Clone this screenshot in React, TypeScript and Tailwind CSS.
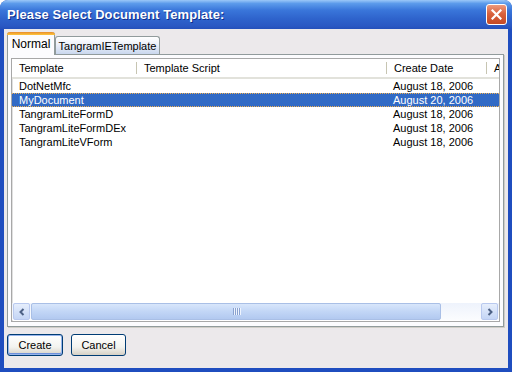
import React from "react";

const rows = [
  { name: "DotNetMfc", date: "August 18, 2006" },
  { name: "MyDocument", date: "August 20, 2006", sel: true },
  { name: "TangramLiteFormD", date: "August 18, 2006" },
  { name: "TangramLiteFormDEx", date: "August 18, 2006" },
  { name: "TangramLiteVForm", date: "August 18, 2006" },
];

function HeaderCell({ label, w }: { label: string; w?: string }) {
  return (
    <div className={`relative flex h-full shrink-0 items-center pl-[6px] ${w ?? "flex-1"}`}>
      <span className="whitespace-nowrap">{label}</span>
      <div className="absolute right-0 top-[3px] bottom-[3px] flex">
        <div className="w-px bg-[#C7C5B2]" />
        <div className="w-px bg-white" />
      </div>
    </div>
  );
}

function ArrowBtn({ dir }: { dir: "l" | "r" }) {
  return (
    <div className="flex h-[17px] w-[17px] shrink-0 items-center justify-center rounded-[2px] border border-[#B9C9EF] bg-gradient-to-b from-[#E6EEFC] to-[#C4D5F5]">
      <svg width="8" height="8" viewBox="0 0 8 8">
        <path
          d={dir === "l" ? "M5.5 1 L2.5 4 L5.5 7" : "M2.5 1 L5.5 4 L2.5 7"}
          fill="none"
          stroke="#4D6185"
          strokeWidth="2"
        />
      </svg>
    </div>
  );
}

export default function App() {
  return (
    <div className="flex h-[372px] w-[512px] flex-col overflow-hidden rounded-t-[8px] bg-[#1F4DBF] font-['Liberation_Sans',Arial,sans-serif] text-[11px] text-black">
      {/* title bar */}
      <div className="flex h-[29px] shrink-0 items-center justify-between bg-[linear-gradient(to_bottom,#9CC8F8_0%,#5C9BEB_12%,#3A76DA_35%,#2E63CC_65%,#2A58C3_90%,#2450BA_100%)] pl-[7px] pr-[5px]">
        <span className="text-[13px] font-bold tracking-[0.1px] text-white [text-shadow:1px_1px_0_#0F2E8A]">
          Please Select Document Template:
        </span>
        <div className="flex h-[21px] w-[21px] items-center justify-center rounded-[3px] border border-white bg-[linear-gradient(to_bottom,#EE9A7E,#D9623E_45%,#C54A25)]">
          <svg width="11" height="11" viewBox="0 0 11 11">
            <path d="M1.5 1.5 L9.5 9.5 M9.5 1.5 L1.5 9.5" stroke="white" strokeWidth="2.2" strokeLinecap="square" />
          </svg>
        </div>
      </div>

      {/* body */}
      <div className="mb-[4px] ml-[4px] mr-[4px] flex flex-1 flex-col bg-[#ECE9EB] pl-[3px] pr-[4px] pt-[3px]">
        {/* tabs */}
        <div className="flex h-[22px] shrink-0 items-end">
          <div className="relative z-10 mb-[-1px] flex h-[23px] w-[48px] items-center justify-center rounded-t-[3px] border-x border-[#919B9C] bg-[#FCFCFE] pb-[2px] text-[12px]">
            <div className="absolute left-[-1px] right-[-1px] top-0 h-[3px] rounded-t-[3px] bg-[linear-gradient(to_bottom,#E68B2C,#FFC73C)]" />
            <span className="mt-[3px]">Normal</span>
          </div>
          <div className="flex h-[18px] w-[105px] items-center justify-center rounded-t-[3px] border border-b-0 border-[#919B9C] bg-[linear-gradient(to_bottom,#FFFFFF,#EEF2FA_40%,#C9D7EE)] pt-[1px]">
            TangramIETemplate
          </div>
        </div>

        {/* panel */}
        <div className="flex h-[273px] shrink-0 flex-col border border-[#919B9C] bg-[#FCFCFE] pb-[4px] pl-[3px] pr-[3px] pt-[3px] shadow-[1px_1px_0_#D0CEC8]">
          <div className="flex flex-1 flex-col border border-[#A8A8A8] bg-white shadow-[inset_1px_1px_0_#E0E0E0]">
            {/* header */}
            <div className="flex h-[20px] shrink-0 border-b-2 border-[#E2E2DB] bg-white pl-px">
              <HeaderCell label="Template" w="w-[125px]" />
              <HeaderCell label="Template Script" w="w-[250px]" />
              <HeaderCell label="Create Date" w="w-[100px]" />
              <div className="flex flex-1 items-center overflow-hidden pl-[6px]">A</div>
            </div>
            {/* rows */}
            <div className="flex flex-1 flex-col">
              {rows.map((r) => (
                <div
                  key={r.name}
                  className={`flex h-[14px] items-center ${
                    r.sel ? "border-y border-dotted border-[#F0B050] bg-[#316AC5] text-white" : ""
                  }`}
                >
                  <span className="w-[375px] shrink-0 pl-[7px]">{r.name}</span>
                  <span className="pl-[6px]">{r.date}</span>
                </div>
              ))}
            </div>
            {/* scrollbar */}
            <div className="mb-px flex h-[17px] shrink-0 bg-[linear-gradient(to_bottom,#EEF3FC,#FBFCFE)] pl-px pr-px">
              <ArrowBtn dir="l" />
              <div className="ml-px flex w-[410px] items-center justify-center rounded-[2px] border border-[#A9BFE6] bg-[linear-gradient(to_bottom,#D8E6FB,#C2D6F6_50%,#B2C9F0)]">
                <div className="flex gap-px">
                  {[0, 1, 2, 3].map((i) => (
                    <div key={i} className="h-[7px] w-px bg-[#8AA2D0] shadow-[1px_0_0_#EEF4FE]" />
                  ))}
                </div>
              </div>
              <div className="flex-1" />
              <ArrowBtn dir="r" />
            </div>
          </div>
        </div>

        {/* buttons */}
        <div className="mt-[7px] flex gap-[8px]">
          <button className="flex h-[22px] w-[56px] items-center justify-center rounded-[3px] border border-[#003C74] bg-[linear-gradient(to_bottom,#FFFFFF,#F3F3EF_60%,#D6D0C5)] shadow-[inset_0_0_0_1px_#97B4EB,inset_0_-1px_0_1px_#6E90DB]">
            Create
          </button>
          <button className="flex h-[22px] w-[55px] items-center justify-center rounded-[3px] border border-[#003C74] bg-[linear-gradient(to_bottom,#FFFFFF,#F3F3EF_60%,#D6D0C5)]">
            Cancel
          </button>
        </div>
      </div>
    </div>
  );
}
